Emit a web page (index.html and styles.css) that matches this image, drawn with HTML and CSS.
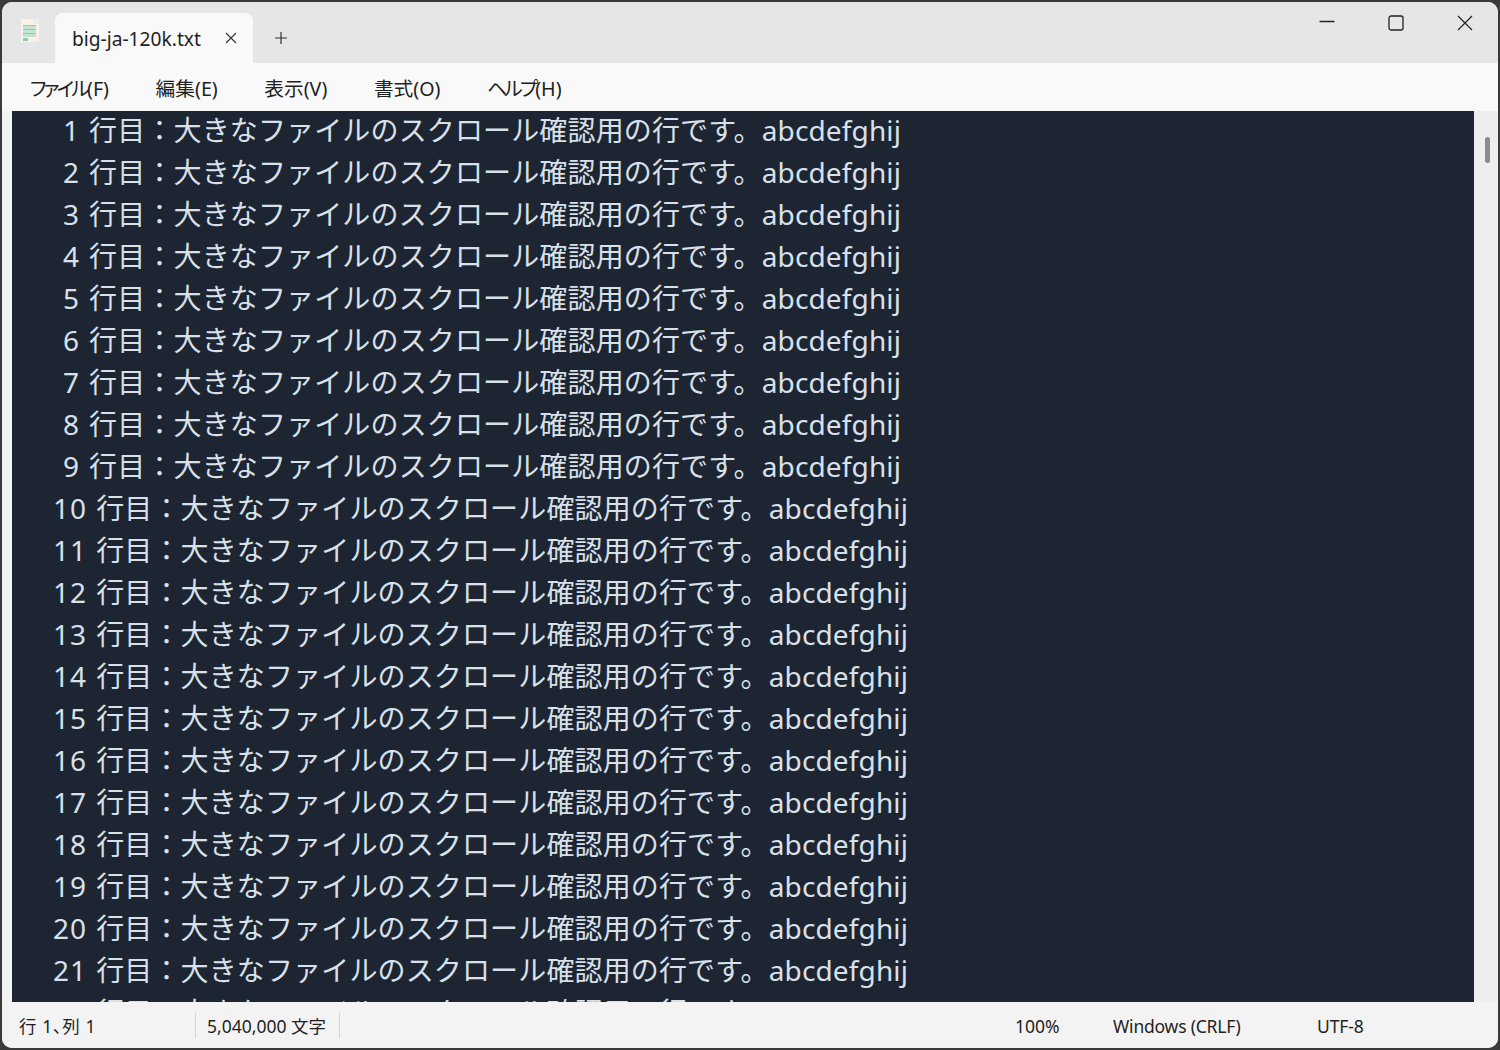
FILE: index.html
```html
<!DOCTYPE html>
<html lang="ja">
<head>
<meta charset="utf-8">
<title>big-ja-120k.txt - Notepad</title>
<link rel="stylesheet" href="styles.css">
</head>
<body>
<div class="window">
  <header class="titlebar">
    <svg class="app-icon" width="18" height="23" viewBox="0 0 18 23"><path fill="#fdf0e6" d="M0 0h13v5h5v18H0z"/><path fill="#e3f1ea" d="M13 0h5v5h-5z"/><path fill="#c3e3d3" d="M2 6h13v12H2z"/><path fill="#8fcbb0" d="M2 6h13v1H2zM2 10h13v1H2zM2 14h13v1H2zM2 19h5v3H2z"/></svg>
    <div class="tab">
      <span class="tab-title">big-ja-120k.txt</span>
      <svg class="tab-close" width="12" height="12" viewBox="0 0 12 12"><path d="M1 1l10 10M11 1L1 11" stroke="#333" stroke-width="1.1" fill="none"/></svg>
    </div>
    <svg class="tab-add" width="14" height="14" viewBox="0 0 14 14"><path d="M7 1v12M1 7h12" stroke="#333" stroke-width="1.2" fill="none"/></svg>
    <div class="controls">
      <svg class="ctl" width="16" height="16" viewBox="0 0 16 16"><path d="M0.500 6.500h15" stroke="#222" stroke-width="1.3" fill="none"/></svg>
      <svg class="ctl" width="16" height="16" viewBox="0 0 16 16"><rect x="1" y="1" width="14" height="14" rx="2" stroke="#222" stroke-width="1.3" fill="none"/></svg>
      <svg class="ctl" width="16" height="16" viewBox="0 0 16 16"><path d="M1 1l14 14M15 1L1 15" stroke="#222" stroke-width="1.2" fill="none"/></svg>
    </div>
  </header>
  <nav class="menubar">
    <span class="menu-item"><span class="kana">ファイル</span>(F)</span>
    <span class="menu-item">編集(E)</span>
    <span class="menu-item">表示(V)</span>
    <span class="menu-item">書式(O)</span>
    <span class="menu-item"><span class="kana">ヘルプ</span>(H)</span>
  </nav>
  <main class="body-row">
    <div class="editor"><pre class="text"><span class="num">  1</span> 行目：大きなファイルのスクロール確認用の行です。abcdefghij
<span class="num">  2</span> 行目：大きなファイルのスクロール確認用の行です。abcdefghij
<span class="num">  3</span> 行目：大きなファイルのスクロール確認用の行です。abcdefghij
<span class="num">  4</span> 行目：大きなファイルのスクロール確認用の行です。abcdefghij
<span class="num">  5</span> 行目：大きなファイルのスクロール確認用の行です。abcdefghij
<span class="num">  6</span> 行目：大きなファイルのスクロール確認用の行です。abcdefghij
<span class="num">  7</span> 行目：大きなファイルのスクロール確認用の行です。abcdefghij
<span class="num">  8</span> 行目：大きなファイルのスクロール確認用の行です。abcdefghij
<span class="num">  9</span> 行目：大きなファイルのスクロール確認用の行です。abcdefghij
<span class="num"> 10</span> 行目：大きなファイルのスクロール確認用の行です。abcdefghij
<span class="num"> 11</span> 行目：大きなファイルのスクロール確認用の行です。abcdefghij
<span class="num"> 12</span> 行目：大きなファイルのスクロール確認用の行です。abcdefghij
<span class="num"> 13</span> 行目：大きなファイルのスクロール確認用の行です。abcdefghij
<span class="num"> 14</span> 行目：大きなファイルのスクロール確認用の行です。abcdefghij
<span class="num"> 15</span> 行目：大きなファイルのスクロール確認用の行です。abcdefghij
<span class="num"> 16</span> 行目：大きなファイルのスクロール確認用の行です。abcdefghij
<span class="num"> 17</span> 行目：大きなファイルのスクロール確認用の行です。abcdefghij
<span class="num"> 18</span> 行目：大きなファイルのスクロール確認用の行です。abcdefghij
<span class="num"> 19</span> 行目：大きなファイルのスクロール確認用の行です。abcdefghij
<span class="num"> 20</span> 行目：大きなファイルのスクロール確認用の行です。abcdefghij
<span class="num"> 21</span> 行目：大きなファイルのスクロール確認用の行です。abcdefghij
<span class="num"> 22</span> 行目：大きなファイルのスクロール確認用の行です。abcdefghij</pre></div>
    <div class="scrollbar"><div class="thumb"></div></div>
  </main>
  <footer class="statusbar">
    <span class="st st-pos">行 1、列 1</span>
    <span class="st st-count">5,040,000 文字</span>
    <span class="st st-zoom">100%</span>
    <span class="st st-eol">Windows (CRLF)</span>
    <span class="st st-enc">UTF-8</span>
  </footer>
</div>
</body>
</html>
```
FILE: styles.css
```css
* { box-sizing: border-box; }
html, body { margin: 0; height: 100%; }
body {
  background: #3a3a3a;
  padding: 2px;
  overflow: hidden;
  font-family: "Noto Sans", "Noto Sans CJK JP", sans-serif;
  color: #1f1f1f;
}
.window {
  height: 1046px;
  border-radius: 10px;
  overflow: hidden;
  display: flex;
  flex-direction: column;
  background: #f3f3f3;
}
.titlebar {
  height: 61px;
  flex: none;
  background: #e6e6e6;
  display: flex;
  align-items: flex-end;
  position: relative;
}
.app-icon { margin: 0 0 21px 19px; flex: none; }
.tab {
  width: 198px;
  height: 50px;
  margin-left: 16px;
  background: #f9f9f9;
  border-radius: 8px 8px 0 0;
  display: flex;
  align-items: center;
  justify-content: space-between;
  padding: 0 16px 0 17px;
  flex: none;
}
.tab-title { font-size: 19.2px; }
.tab-add { margin: 0 0 18px 21px; flex: none; }
.controls {
  margin-left: auto;
  align-self: flex-start;
  display: flex;
  gap: 53px;
  padding: 13px 25px 0 0;
}
.menubar {
  height: 48px;
  flex: none;
  background: #f9f9f9;
  display: flex;
  align-items: center;
  padding: 0 0 0 28px;
  gap: 46.600px;
  font-size: 19.700px;
  font-feature-settings: "palt";
}
.kana { letter-spacing: -2.800px; }
.body-row {
  height: 891px;
  flex: none;
  display: flex;
  padding-left: 10px;
  background: #f3f3f3;
}
.editor {
  width: 1462px;
  background: #1e2532;
  overflow: hidden;
}
.text {
  margin: -2px 0 0;
  padding-left: 31px;
  font-family: "Noto Sans", "Noto Sans CJK JP", sans-serif;
  font-size: 28px;
  line-height: 42px;
  color: #d8e0ea;
  white-space: pre;
  word-spacing: 1.700px;
  letter-spacing: 0.140px;
}
.num {
  letter-spacing: 1px;
}
.scrollbar {
  width: 24px;
  background: #eeeeee;
  padding: 26px 0 0 11px;
}
.thumb {
  width: 5px;
  height: 26px;
  background: #8c8c8c;
  border-radius: 3px;
}
.statusbar {
  flex: 1;
  background: #f3f3f3;
  display: flex;
  align-items: center;
  font-size: 17.500px;
}
.st { display: flex; align-items: center; height: 25px; }
.st-pos { width: 194px; padding-left: 17px; border-right: 1px solid #d4d4d4; font-feature-settings: "palt"; letter-spacing: 0.600px; }
.st-count { width: 144px; padding-left: 11px; border-right: 1px solid #d4d4d4; }
.st-zoom { margin-left: 675px; width: 98px; padding-top: 1px; }
.st-eol { width: 204px; letter-spacing: -0.2px; padding-top: 1px; }
.st-enc { letter-spacing: -0.1px; padding-top: 1px; }
```
